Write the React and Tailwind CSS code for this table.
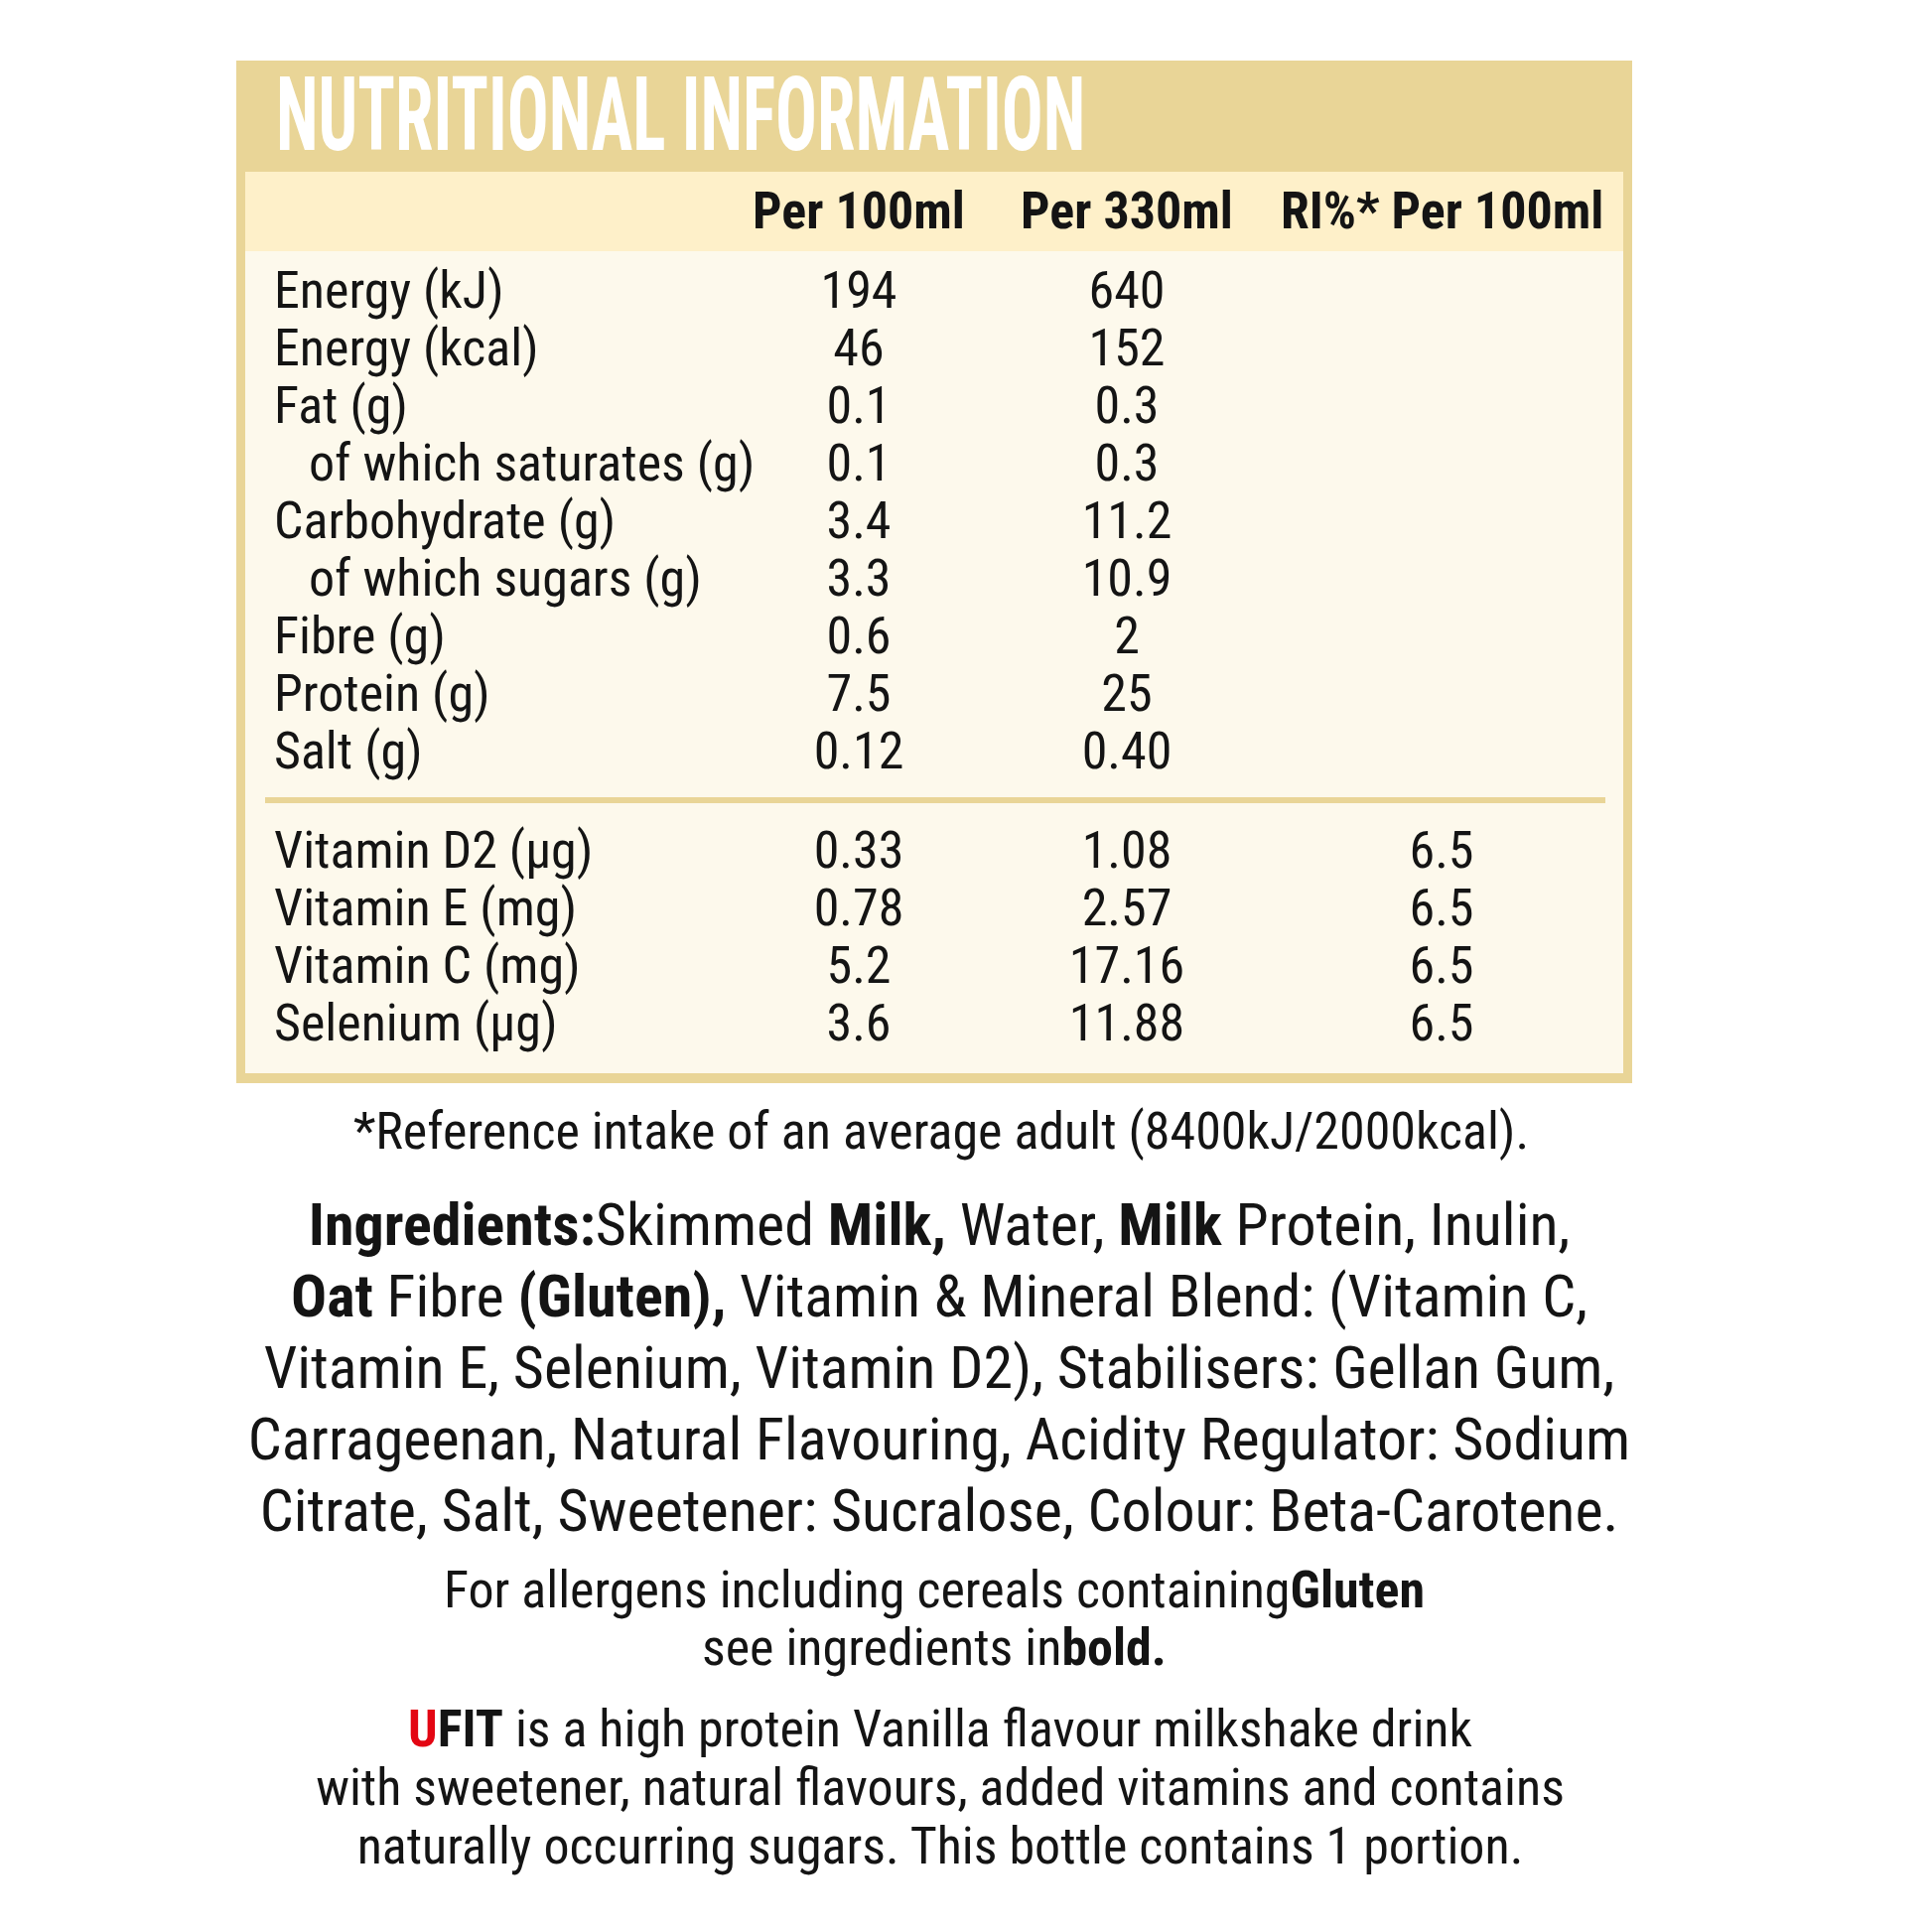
const nutrients = [
  { label: "Energy (kJ)", per100: "194", per330: "640" },
  { label: "Energy (kcal)", per100: "46", per330: "152" },
  { label: "Fat (g)", per100: "0.1", per330: "0.3" },
  { label: "of which saturates (g)", per100: "0.1", per330: "0.3", sub: true },
  { label: "Carbohydrate (g)", per100: "3.4", per330: "11.2" },
  { label: "of which sugars (g)", per100: "3.3", per330: "10.9", sub: true },
  { label: "Fibre (g)", per100: "0.6", per330: "2" },
  { label: "Protein (g)", per100: "7.5", per330: "25" },
  { label: "Salt (g)", per100: "0.12", per330: "0.40" },
];

const vitamins = [
  { label: "Vitamin D2 (µg)", per100: "0.33", per330: "1.08", ri: "6.5" },
  { label: "Vitamin E (mg)", per100: "0.78", per330: "2.57", ri: "6.5" },
  { label: "Vitamin C (mg)", per100: "5.2", per330: "17.16", ri: "6.5" },
  { label: "Selenium (µg)", per100: "3.6", per330: "11.88", ri: "6.5" },
];

const cols = "grid grid-cols-[474px_230px_310px_324px]";

function Row({ row }) {
  return (
    <div className={`${cols} h-[58px] items-center leading-[58px]`}>
      <div className={row.sub ? "pl-[35px] whitespace-nowrap" : "whitespace-nowrap"}>{row.label}</div>
      <div className="text-center">{row.per100}</div>
      <div className="text-center">{row.per330}</div>
      <div className="text-center">{row.ri}</div>
    </div>
  );
}

export default function App() {
  return (
    <div className="min-h-screen bg-white pt-[61px] pl-[238px] font-['Roboto_Condensed',_'Roboto',_sans-serif] text-[#141414]">
      <div className="w-[1406px]">
        <div className="bg-[#e9d597] px-[9px] pb-[10px]">
          <div className="h-[112px] pl-[31px] pt-[2px]">
            <h1 className="inline-block origin-left scale-x-[0.675] whitespace-nowrap text-[103px] font-bold leading-[106px] text-white">
              NUTRITIONAL INFORMATION
            </h1>
          </div>
          <div className="bg-[#fdf9ec]">
            <div className={`${cols} h-[80px] items-center bg-[#fef0c9] pl-[29px] text-[52px] font-bold leading-none`}>
              <div />
              <div className="text-center">Per 100ml</div>
              <div className="text-center">Per 330ml</div>
              <div className="text-center whitespace-nowrap">RI%* Per 100ml</div>
            </div>
            <div className="pl-[29px] pt-[11px] text-[52px]">
              {nutrients.map((row) => (
                <Row key={row.label} row={row} />
              ))}
            </div>
            <div className="ml-[20px] mr-[18px] mt-[17px] h-[6px] bg-[#e9d597]" />
            <div className="pl-[29px] pt-[19px] pb-[21px] text-[52px]">
              {vitamins.map((row) => (
                <Row key={row.label} row={row} />
              ))}
            </div>
          </div>
        </div>

        <p className="mt-[20px] pl-[14px] text-center text-[52px] leading-[58px]">
          *Reference intake of an average adult (8400kJ/2000kcal).
        </p>

        <p className="mt-[29px] pl-[10px] text-center text-[60px] leading-[72px]">
          <b>Ingredients:</b>Skimmed <b>Milk,</b> Water, <b>Milk</b> Protein, Inulin,
          <br />
          <b>Oat</b> Fibre <b>(Gluten),</b> Vitamin &amp; Mineral Blend: (Vitamin C,
          <br />
          Vitamin E, Selenium, Vitamin D2), Stabilisers: Gellan Gum,
          <br />
          Carrageenan, Natural Flavouring, Acidity Regulator: Sodium
          <br />
          Citrate, Salt, Sweetener: Sucralose, Colour: Beta-Carotene.
        </p>

        <p className="mt-[15px] text-center text-[52px] leading-[58px]">
          For allergens including cereals containing<b>Gluten</b>
          <br />
          see ingredients in<b>bold.</b>
        </p>

        <p className="mt-[23px] pl-[12px] text-center text-[52px] leading-[59px]">
          <span className="font-bold">
            <span className="text-[#e30613]">U</span>FIT
          </span>{" "}
          is a high protein Vanilla flavour milkshake drink
          <br />
          with sweetener, natural flavours, added vitamins and contains
          <br />
          naturally occurring sugars. This bottle contains 1 portion.
        </p>
      </div>
    </div>
  );
}
